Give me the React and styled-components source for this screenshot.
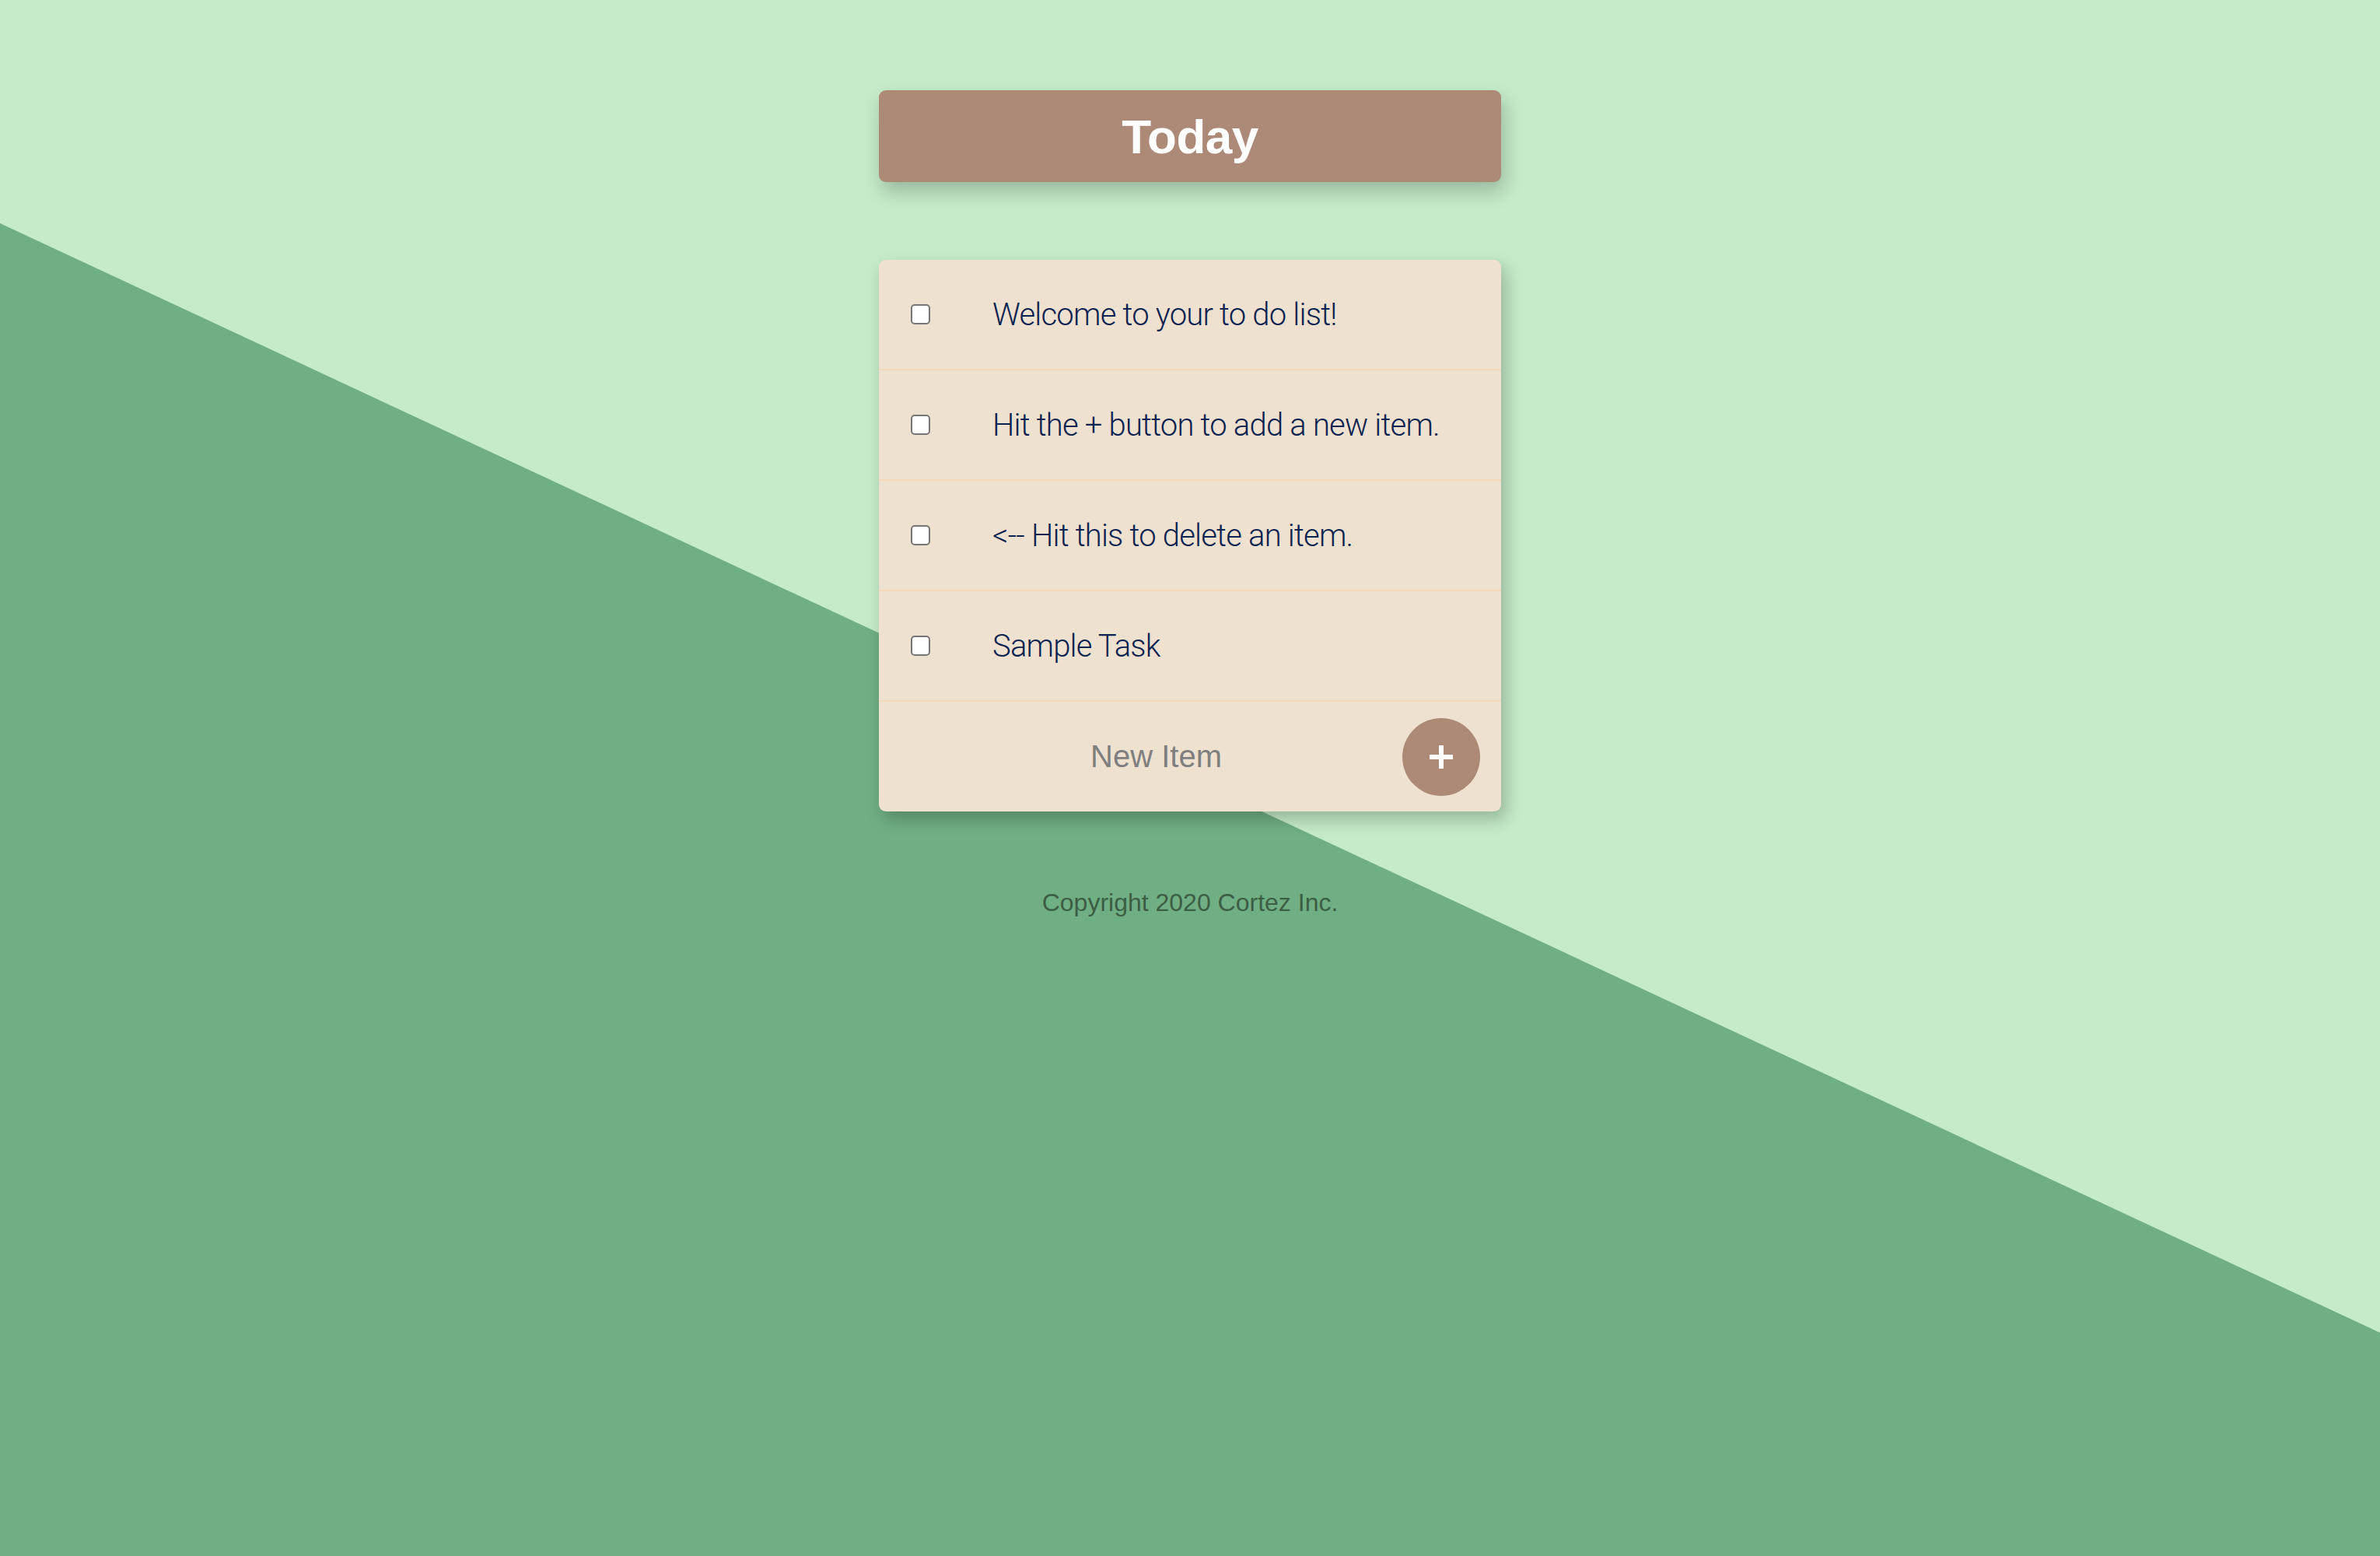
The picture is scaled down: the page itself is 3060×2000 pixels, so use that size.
import styled, { createGlobalStyle } from 'styled-components'


const GlobalStyle = createGlobalStyle`
	html, body {
		margin: 0;
		padding: 0;
	}
	body {
		background-color: #c5ebc8;
		font-family: "Liberation Sans", Arial, sans-serif;
	}
`

const Page = styled.div`
	position: relative;
	display: flex;
	flex-direction: column;
	align-items: center;
	min-height: 2000px;
	width: 100%;
	padding-top: 116px;
	box-sizing: border-box;
	overflow: hidden;

	&::before {
		content: '';
		position: absolute;
		inset: 0;
		background-color: #70af84;
		clip-path: polygon(0 287px, 100% 1713px, 100% 100%, 0 100%);
		z-index: 0;
	}
`

const Heading = styled.header`
	position: relative;
	z-index: 1;
	display: flex;
	align-items: center;
	justify-content: center;
	width: 800px;
	height: 118px;
	background-color: #ac8a77;
	border-radius: 9px;
	box-shadow: 4px 12px 24px rgba(0, 0, 0, 0.22);
`

const Title = styled.h1`
	margin: 0;
	color: #fff;
	font-size: 62px;
	font-weight: 700;
	letter-spacing: -0.5px;
`

const Card = styled.div`
	position: relative;
	z-index: 1;
	width: 800px;
	margin-top: 100px;
	background-color: #efe1d0;
	border-radius: 9px;
	box-shadow: 6px 10px 22px rgba(0, 0, 0, 0.24);
	overflow: hidden;
`

const Item = styled.div`
	display: flex;
	align-items: center;
	height: 142px;
	padding-left: 41px;
	box-sizing: border-box;
	border-bottom: 2px solid #f2d9bb;
`

const Check = styled.input`
	appearance: none;
	flex: 0 0 auto;
	width: 25px;
	height: 26px;
	margin: 0;
	background-color: #fff;
	border: 2px solid #767676;
	border-radius: 5px;
	box-sizing: border-box;
`

const Label = styled.p`
	margin: 0 0 0 80px;
	color: #0b2350;
	font-family: Roboto, "Liberation Sans", sans-serif;
	font-weight: 300;
	font-size: 40px;
	letter-spacing: -0.8px;
`

const Form = styled.form`
	display: flex;
	align-items: center;
	height: 141px;
	padding: 0 27px 0 40px;
	box-sizing: border-box;
`

const NewItem = styled.input`
	flex: 1 1 0;
	min-width: 0;
	background: transparent;
	border: none;
	outline: none;
	text-align: center;
	font-family: "Liberation Sans", Arial, sans-serif;
	font-size: 40px;
	color: #333;

	&::placeholder {
		color: #7f7f7f;
	}
`

const AddButton = styled.button`
	display: flex;
	align-items: center;
	justify-content: center;
	flex: 0 0 100px;
	width: 100px;
	height: 100px;
	padding: 0;
	border: none;
	border-radius: 50%;
	background-color: #ac8a77;
	cursor: pointer;
`

const Footer = styled.footer`
	position: relative;
	z-index: 1;
	margin-top: 99px;
	color: #3c5e45;
	font-size: 32px;
	line-height: 37px;
`

const items = [
	'Welcome to your to do list!',
	'Hit the + button to add a new item.',
	'<-- Hit this to delete an item.',
	'Sample Task',
]

const App = () => {
	return (
		<Page>
			<GlobalStyle />
			<Heading>
				<Title>Today</Title>
			</Heading>
			<Card>
				{ items.map((text) => (
					<Item key={ text }>
						<Check type="checkbox" />
						<Label>{ text }</Label>
					</Item>
				)) }
				<Form onSubmit={ (e) => e.preventDefault() }>
					<NewItem type="text" placeholder="New Item" />
					<AddButton type="submit" aria-label="Add">
						<svg width="30" height="30" viewBox="0 0 30 30">
							<path d="M15 0v30M0 15h30" stroke="#fff" strokeWidth="6" />
						</svg>
					</AddButton>
				</Form>
			</Card>
			<Footer>Copyright 2020 Cortez Inc.</Footer>
		</Page>
	)
}

export default App
